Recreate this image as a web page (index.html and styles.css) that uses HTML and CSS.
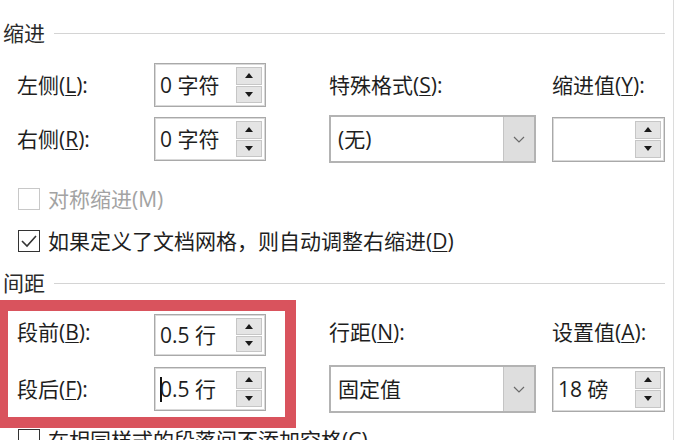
FILE: index.html
```html
<!DOCTYPE html>
<html lang="zh-CN">
<head>
<meta charset="utf-8">
<title>段落</title>
<link rel="stylesheet" href="styles.css">
</head>
<body>
<div class="page">
  <div class="sec-head first"><span>缩进</span><i class="rule"></i></div>
  <div class="grid indent">
    <div class="lbl">左侧(<u>L</u>):</div>
    <div class="spin"><span class="val">0 字符</span><span class="btns"><b class="btn"><i class="up"></i></b><b class="btn"><i class="dn"></i></b></span></div>
    <div class="lbl">特殊格式(<u>S</u>):</div>
    <div class="lbl">缩进值(<u>Y</u>):</div>

    <div class="lbl">右侧(<u>R</u>):</div>
    <div class="spin"><span class="val">0 字符</span><span class="btns"><b class="btn"><i class="up"></i></b><b class="btn"><i class="dn"></i></b></span></div>
    <div class="select"><span class="val">(无)</span><span class="drop"><svg width="12" height="7" viewBox="0 0 12 7"><polyline points="1,1 6,6 11,1" fill="none" stroke="#6a6a6a" stroke-width="1.2"/></svg></span></div>
    <div class="spin right"><span class="val"></span><span class="btns"><b class="btn"><i class="up"></i></b><b class="btn"><i class="dn"></i></b></span></div>
  </div>

  <div class="check disabled c1"><span class="box"></span><span>对称缩进(M)</span></div>
  <div class="check c2"><span class="box"><svg width="20" height="20" viewBox="0 0 20 20"><polyline points="3,10 8,15 17,5" fill="none" stroke="#333" stroke-width="1.6"/></svg></span><span>如果定义了文档网格，则自动调整右缩进(<u>D</u>)</span></div>

  <div class="sec-head second"><span>间距</span><i class="rule"></i></div>
  <div class="grid spacing">
    <div class="lbl top">段前(<u>B</u>):</div>
    <div class="spin s1"><span class="val">0.5 行</span><span class="btns"><b class="btn"><i class="up"></i></b><b class="btn"><i class="dn"></i></b></span></div>
    <div class="lbl top">行距(<u>N</u>):</div>
    <div class="lbl top">设置值(<u>A</u>):</div>

    <div class="lbl">段后(<u>F</u>):</div>
    <div class="spin"><span class="val"><i class="caret"></i>0.5 行</span><span class="btns"><b class="btn"><i class="up"></i></b><b class="btn"><i class="dn"></i></b></span></div>
    <div class="select"><span class="val">固定值</span><span class="drop"><svg width="12" height="7" viewBox="0 0 12 7"><polyline points="1,1 6,6 11,1" fill="none" stroke="#6a6a6a" stroke-width="1.2"/></svg></span></div>
    <div class="spin right"><span class="val">18 磅</span><span class="btns"><b class="btn"><i class="up"></i></b><b class="btn"><i class="dn"></i></b></span></div>
  </div>

  <div class="check c3"><span class="box"></span><span>在相同样式的段落间不添加空格(<u>C</u>)</span></div>

  <div class="highlight"></div>
</div>
</body>
</html>
```

FILE: styles.css
```css
html, body {
  margin: 0;
  padding: 0;
  background: #ffffff;
}

.page {
  position: relative;
  width: 673px;
  height: 440px;
  overflow: hidden;
  border-right: 1px solid #dcdcdc;
  font-family: "Open Sans", "Noto Sans CJK SC", sans-serif;
  font-size: 21px;
  color: #1e1e1e;
  line-height: 1;
}

u {
  text-decoration: underline;
  text-underline-offset: 2px;
  text-decoration-thickness: 1px;
}

.sec-head {
  display: flex;
  align-items: center;
  height: 22px;
  padding-left: 3px;
  margin-right: 8px;
  gap: 9px;
  color: #2a2a2a;
}

.sec-head.first { margin-top: 22px; }
.sec-head.second { margin-top: 20px; }

.rule {
  flex: 1;
  height: 1px;
  background: #d4d4d4;
}

.grid {
  display: grid;
  padding-left: 17px;
  grid-template-columns: 137px 175px 223px 113px;
  align-items: center;
  justify-items: start;
}

.indent {
  margin-top: 19px;
  grid-template-rows: 44px 48px;
  row-gap: 8px;
}

.spacing {
  margin-top: 18px;
  grid-template-rows: 46px 48px;
  row-gap: 7px;
}

.lbl {
  white-space: nowrap;
}

.lbl.top {
  padding-bottom: 6px;
}

.spin {
  box-sizing: border-box;
  width: 112px;
  height: 44px;
  border: 1px solid #a9a9a9;
  box-shadow: inset 0 0 0 1px #d9d9d9;
  display: flex;
  align-items: stretch;
  background: #fff;
}

.spin.s1 { height: 42px; }
.spin.right { width: 113px; height: 45px; }

.val {
  flex: 1;
  display: flex;
  align-items: center;
  padding-left: 5px;
  white-space: nowrap;
}

.caret {
  display: inline-block;
  width: 2px;
  height: 25px;
  background: #111;
  margin-right: -2px;
}

.btns {
  display: flex;
  flex-direction: column;
  width: 26px;
  margin: 3px 3px 3px 0;
  gap: 1px;
}

.btn {
  flex: 1;
  box-sizing: border-box;
  background: #e4e4e4;
  border: 1px solid #c6c6c6;
  display: flex;
  align-items: center;
  justify-content: center;
}

.up, .dn {
  display: block;
  width: 0;
  height: 0;
  border-left: 4px solid transparent;
  border-right: 4px solid transparent;
}

.up { border-bottom: 5px solid #1a1a1a; }
.dn { border-top: 5px solid #1a1a1a; }

.select {
  box-sizing: border-box;
  width: 207px;
  height: 48px;
  border: 2px solid #b3b3b3;
  display: flex;
  align-items: stretch;
  background: #fff;
}

.select .val {
  padding-left: 7px;
}

.drop {
  width: 30px;
  background: #dedede;
  border-left: 1px solid #c4c4c4;
  display: flex;
  align-items: center;
  justify-content: center;
}

.check {
  display: flex;
  align-items: center;
  height: 22px;
  padding-left: 18px;
  gap: 8px;
  white-space: nowrap;
}

.c1 { margin-top: 25px; }
.c2 { margin-top: 20px; }
.c3 { margin-top: 16px; }

.box {
  box-sizing: border-box;
  width: 22px;
  height: 22px;
  border: 1px solid #333;
  background: #fff;
  display: flex;
  align-items: center;
  justify-content: center;
}

.check.disabled {
  color: #a3a3a3;
}

.check.disabled .box {
  border-color: #c8c8c8;
}

.highlight {
  position: absolute;
  left: -3px;
  top: 300px;
  width: 299px;
  height: 128px;
  box-sizing: border-box;
  border: 11px solid #d9535d;
  pointer-events: none;
}
```
